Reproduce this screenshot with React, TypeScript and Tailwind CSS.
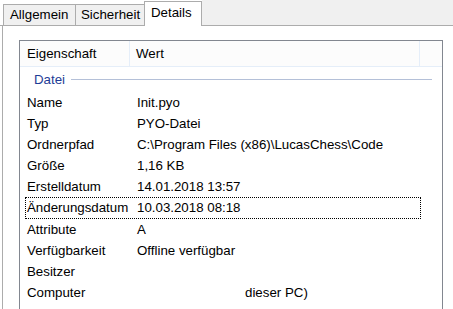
const rows: [string, string][] = [
  ['Name', 'Init.pyo'],
  ['Typ', 'PYO-Datei'],
  ['Ordnerpfad', 'C:\\Program Files (x86)\\LucasChess\\Code'],
  ['Größe', '1,16 KB'],
  ['Erstelldatum', '14.01.2018 13:57'],
  ['Änderungsdatum', '10.03.2018 08:18'],
  ['Attribute', 'A'],
  ['Verfügbarkeit', 'Offline verfügbar'],
  ['Besitzer', ''],
]

function Row({ label, value, focused }: { label: string; value: string; focused?: boolean }) {
  return (
    <div
      className={
        focused
          ? 'ml-[5px] flex h-[22px] w-[396px] items-center border border-dotted border-black pl-[1px]'
          : 'ml-[5px] flex h-[21px] w-[396px] items-center pl-[2px]'
      }
    >
      <span className="w-[110px] shrink-0 whitespace-nowrap">{label}</span>
      <span className="whitespace-nowrap">{value}</span>
    </div>
  )
}

export default function App() {
  return (
    <div className="flex h-[309px] w-[453px] flex-col overflow-hidden bg-white font-['Liberation_Sans',Arial,sans-serif] text-[13.3px] text-black">
      <div className="flex h-[26px] shrink-0 items-end">
        <div className="h-full w-[3px] border-b border-[#acacac]" />
        <div className="flex h-[22px] w-[72px] items-center border-y border-l border-[#acacac] bg-[#f0f0f0] pl-[6px]">
          Allgemein
        </div>
        <div className="flex h-[22px] w-[69px] items-center border-y border-l border-[#acacac] bg-[#f0f0f0] pl-[5px]">
          Sicherheit
        </div>
        <div className="flex h-[25px] w-[58px] items-center border-x border-t border-[#acacac] bg-white pb-[3px] pl-[6px]">
          Details
        </div>
        <div className="h-full flex-1 border-b border-[#acacac] bg-[#f0f0f0]" />
      </div>

      <div className="ml-[2px] flex-1 border-l border-[#acacac] pt-[14px] pl-[16px]">
        <div className="h-[300px] w-[424px] border border-[#828790]">
          <div className="flex h-[26px] border-b border-[#e5eef9] bg-[#fcfcfc]">
            <div className="flex w-[110px] items-center border-r border-[#e5eef9] pl-[7px]">Eigenschaft</div>
            <div className="flex w-[290px] items-center border-r border-[#e5eef9] pl-[6px]">Wert</div>
          </div>

          <div className="flex h-[25px] items-center pl-[14px] pr-[10px]">
            <span className="text-[#1e3c96]">Datei</span>
            <div className="ml-[6px] h-px flex-1 bg-[#b4c0d8]" />
          </div>

          {rows.map(([l, v]) => (
            <Row key={l} label={l} value={v} focused={l === 'Änderungsdatum'} />
          ))}
          <div className="ml-[5px] flex h-[21px] items-center pl-[2px]">
            <span className="w-[110px] shrink-0">Computer</span>
            <span className="ml-[108px] whitespace-nowrap">dieser PC)</span>
          </div>
        </div>
      </div>
    </div>
  )
}
